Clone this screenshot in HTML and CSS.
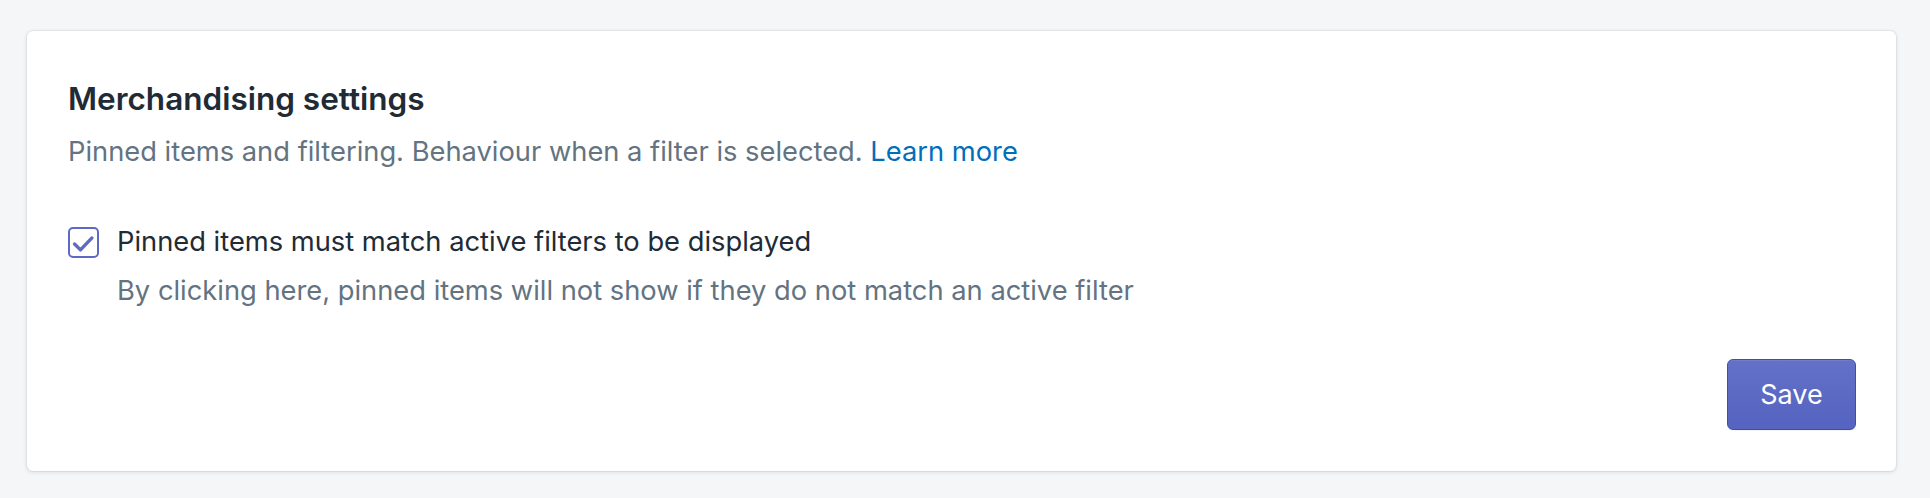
FILE: index.html
```html
<!DOCTYPE html>
<html lang="en">
<head>
    <meta charset="UTF-8">
    <meta name="viewport" content="width=device-width, initial-scale=1.0">
    <title>Merchandising settings</title>
    <link rel="stylesheet" href="styles.css">
</head>
<body>
    <div class="page">
        <section class="card">
            <h2 class="card-title">Merchandising settings</h2>
            <p class="card-text">Pinned items and filtering. Behaviour when a filter is selected. <a href="#" class="link">Learn more</a></p>

            <div class="choice">
                <label class="choice-label">
                    <span class="checkbox">
                        <svg viewBox="0 0 16 16" width="27" height="27" aria-hidden="true">
                            <path d="M2.7 8.9 L6.2 12.4 L13 5.3" fill="none" stroke="#5c6ac4" stroke-width="2" stroke-linecap="round" stroke-linejoin="round"/>
                        </svg>
                    </span>
                    <span class="choice-text">Pinned items must match active filters to be displayed</span>
                </label>
                <p class="choice-help">By clicking here, pinned items will not show if they do not match an active filter</p>
            </div>

            <div class="card-footer">
                <button class="btn-primary" type="button">Save</button>
            </div>
        </section>
    </div>
</body>
</html>
```

FILE: styles.css
```css
/* General Styling */
body {
    margin: 0;
    padding: 0;
    background-color: #f4f6f8;
    font-family: 'Inter', 'Noto Sans', sans-serif;
    color: #212b36;
}

.page {
    padding: 31px 34px 28px 27px;
}

.card {
    background-color: #fff;
    border-radius: 6px;
    box-shadow: 0 0 0 1px rgba(63, 63, 68, 0.05), 0 1px 4px 0 rgba(63, 63, 68, 0.16);
    padding: 43px 40px 41px 41px;
}

.card-title {
    margin: 0;
    font-size: 31.5px;
    line-height: 46px;
    font-weight: 600;
    color: #212b36;
    padding-top: 2px;
}

.card-text {
    margin: 11px 0 0;
    font-size: 27.3px;
    line-height: 38px;
    color: #637381;
}

.link {
    color: #006fbb;
    text-decoration: none;
}

/* Checkbox */
.choice {
    margin-top: 52px;
}

.choice-label {
    display: flex;
    align-items: center;
    gap: 18px;
    font-size: 27.3px;
    line-height: 38px;
    color: #212b36;
    cursor: pointer;
}

.checkbox {
    width: 31px;
    height: 31px;
    box-sizing: border-box;
    border: 2px solid #5c6ac4;
    border-radius: 5px;
    display: flex;
    align-items: center;
    justify-content: center;
    flex-shrink: 0;
}

.choice-help {
    margin: 11px 0 0 49px;
    font-size: 27.3px;
    line-height: 38px;
    color: #637381;
}

/* Footer */
.card-footer {
    display: flex;
    justify-content: flex-end;
    margin-top: 49px;
}

.btn-primary {
    min-width: 129px;
    height: 71px;
    padding: 0 30px;
    font-family: inherit;
    font-size: 27px;
    color: #fff;
    background: linear-gradient(180deg, #6371c7, #5563c1);
    border: 1px solid #3f4eae;
    border-radius: 6px;
    box-shadow: inset 0 1px 0 0 #6f7bcb, 0 1px 0 0 rgba(22, 29, 37, 0.05);
    cursor: pointer;
}
```
